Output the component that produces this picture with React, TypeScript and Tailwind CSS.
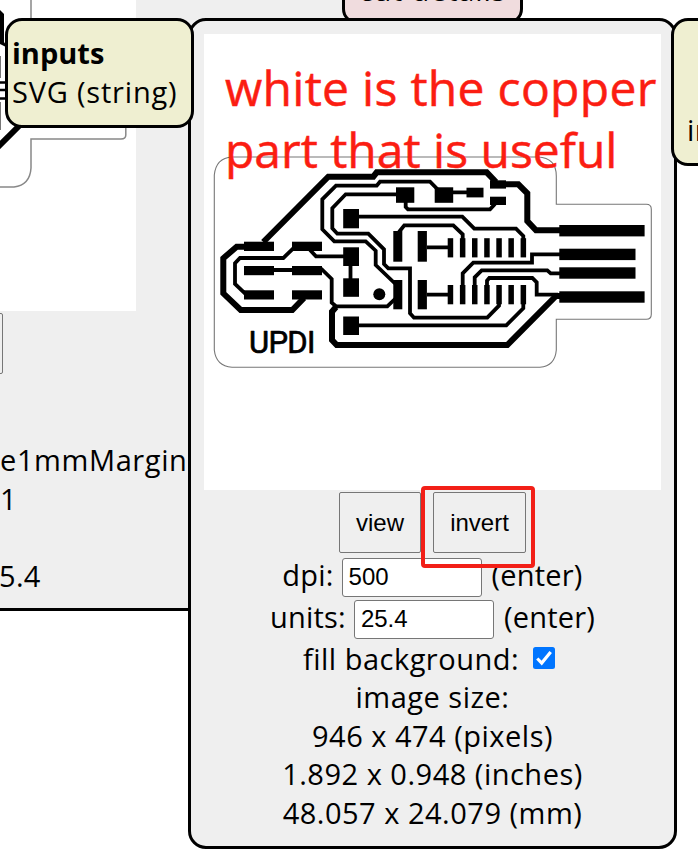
import React from "react";

const font = "font-['Open_Sans','Noto_Sans',sans-serif]";

const thick = [
  "M263.3 242L328.3 176.7H373.3L376.7 172.3H486.7L496 182",
  "M500 184.3H518.3L527.3 193.3V221L536 230.3H560",
  "M245 246.7H236.7L223.3 258.3V293.3L240.7 310H292.3L304 298",
  "M336 307L332 311.7V340L336.7 345H507.3L556 296H560",
];

const thin = [
  "M395 283.5L375.7 265V250.7L365.7 241.3H334.3L322.3 229.3V199.3L336 185.7H376.7L380 181.7H430L437.3 189",
  "M397 194.3H345.7L332.3 208.3V228.3L337.3 233.7H368.3L384 249.3V264L388.3 268.3H410V313.3L414 317.7H487.3L499 305.7V300",
  "M405.7 202V207L408 209.3H490L495 204",
  "M358 216.7H462.3L474.3 228.7H516L523.3 236V240",
  "M399 232L404.3 225.3H453.3L462.7 234.3V240",
  "M427 247.3H448M427 294.7H448M453 192.3H467",
  "M462.7 286V273.3L473.3 262.7H532V254.3H560",
  "M474.7 286V277.3L481.7 270.3H547.3L550.7 273.3H560",
  "M487 286V280.7L489.3 278H532.3L536.7 282.3V294.7H558",
  "M523.3 303V308.3L506.3 325.3H358",
  "M246 294.3L235 284V263.3L240 258H283.3L293.3 248.3",
  "M310 250L316 256.3H344M350.5 265V279M273 270H293",
  "M321 268.5L331.7 279V302.7L336 306.3H387.3L396 298",
];

const pads: number[][] = [
  [396, 187.3, 18.3, 15.5], [434.7, 187.3, 18.5, 15.5], [466.5, 187.7, 17, 9.7],
  [490, 180.3, 16, 8.3], [490, 196.7, 16, 8.3],
  [343.2, 209, 15.8, 19.3], [343.2, 247.3, 15.8, 18.7], [343.2, 278.3, 15.8, 18.5], [343.2, 316.5, 15.8, 18.5],
  [393.3, 231, 9, 30.7], [417.7, 231, 9.2, 30.7], [393.3, 280, 9, 29.3], [417.7, 280, 9.2, 29.3],
  [244, 241.7, 30, 9.3], [292, 241.7, 30, 9.3], [244, 266, 30, 9.2], [292, 266, 30, 9.2], [244, 290.3, 30, 9.2], [292, 290.3, 30, 9.2],
  [559.3, 225, 85.3, 11.4], [559.3, 248.7, 76.2, 11.4], [559.3, 267.3, 76.2, 11.4], [559.3, 291.3, 85.3, 11.4],
];
const pins = [447.7, 459.9, 472, 484.2, 496.3, 508.4, 520.6];

function Board() {
  return (
    <svg className="block h-[456px] w-[457px] bg-white" viewBox="204 34 457 456">
      <path d="M232 157H538Q556.3 158 556.3 176V204.3H646.3Q651.3 204.3 651.3 209.3V314.3Q651.3 319.3 646.3 319.3H556.3V350Q555 366 540 367.3H232Q216 366 214.3 350V175Q216 158 232 157Z" fill="none" stroke="#777" strokeWidth="1.1" />
      <g fill="none" stroke="#000">
        {thick.map((d) => <path key={d} d={d} strokeWidth="6" />)}
        {thin.map((d) => <path key={d} d={d} strokeWidth="3.8" />)}
      </g>
      {pads.map(([x, y, w, h]) => <rect key={x + "-" + y} x={x} y={y} width={w} height={h} />)}
      {pins.map((x) => (
        <g key={x}>
          <rect x={x} y="238.2" width="5.5" height="19.2" />
          <rect x={x} y="285" width="5.5" height="19.3" />
        </g>
      ))}
      <circle cx="379.3" cy="294.3" r="6" />
      <g fontSize="31" fontFamily="Roboto, sans-serif" stroke="#000" strokeWidth="0.7" strokeLinejoin="round">
        <text x="249" y="353" textLength="67" lengthAdjust="spacing">UPDI</text>
      </g>
    </svg>
  );
}

function Field({ label, value }: { label: string; value: string }) {
  return (
    <div className="flex h-[42px] items-center justify-center">
      <span className="-mt-[3px] tracking-[0.2px]">{label}</span>
      <span className="ml-[8px] mr-[10px] flex h-[39px] w-[140px] items-center rounded-[3px] border border-[#767676] bg-white pl-[6px] font-['Liberation_Sans',Arial,sans-serif] text-[24px] tracking-normal">{value}</span>
      <span className="-mt-[3px] tracking-[0.2px]">(enter)</span>
    </div>
  );
}

const button = "flex h-[61px] items-center justify-center rounded-[2px] border border-[#767676] bg-[#efefef] pt-px font-['Liberation_Sans',Arial,sans-serif] text-[24px] tracking-normal text-black";

export default function App() {
  return (
    <div className={`relative h-[868px] w-[698px] overflow-hidden bg-white text-[29px] leading-[38.6px] tracking-[0.5px] text-black ${font}`}>
      <section className="absolute left-[-280px] top-[-20px] h-[631px] w-[642px] border-[3px] border-black bg-[#efefef]">
        <div className="ml-auto mr-[223px] h-[328px] w-[413px] bg-white">
          <svg className="ml-auto block h-[328px] w-[136px]" viewBox="0 -17 136 328">
            <path d="M31 -17V30M125.8 110V135Q125.8 139 121 139H31V168Q30 185 14 187H0" fill="none" stroke="#888" strokeWidth="1.5" />
            <path d="M0 10L4 14V42L8 48L0 44Z" />
            <path d="M0.5 56V78M0.5 102V130" stroke="#777" />
            <path d="M0 82.5H8M0 90H8M0 98.5H8" stroke="#000" strokeWidth="2.6" />
            <path d="M-2 147L26 119" stroke="#000" strokeWidth="6" />
          </svg>
        </div>
        <div className="mt-[2px] h-[61px] w-[280px] rounded-[2px] border border-[#767676]" />
        <div className="ml-[277px] mt-[67px] leading-[38.6px] tracking-[0.6px]">
          <p>e1mmMargin</p>
          <p>1</p>
          <p className="mt-[38.6px] -ml-px tracking-[0.3px]">5.4</p>
        </div>
      </section>

      <div className="absolute left-[342px] top-[-40px] flex h-[64px] w-[181px] justify-center rounded-[15px] border-[3px] border-black bg-[#f0dcde] pt-[8px] tracking-[0.8px]">cut details</div>

      <section className="absolute left-[188px] top-[18px] flex h-[831px] w-[489px] flex-col items-center rounded-[18px] border-[3px] border-black bg-[#efefef] pt-[13px]">
        <Board />
        <div className="mb-[3px] mt-[2px] flex gap-[12px]">
          <button className={`${button} w-[82px]`}>view</button>
          <button className={`${button} w-[93px]`}>invert</button>
        </div>
        <Field label="dpi:" value="500" />
        <Field label="units:" value="25.4" />
        <div className="mr-[7px] flex h-[38px] items-center gap-[14px]">
          <span>fill background:</span>
          <svg className="-mt-[2px] h-[22px] w-[22px]" viewBox="0 0 22 22">
            <rect width="22" height="22" rx="2.5" fill="#0075ff" />
            <path d="M4.3 11.5L8.7 16L17.7 5" fill="none" stroke="#fff" strokeWidth="3.2" />
          </svg>
        </div>
        <p>image size:</p>
        <p>946 x 474 (pixels)</p>
        <p>1.892 x 0.948 (inches)</p>
        <p>48.057 x 24.079 (mm)</p>
      </section>

      <div className="absolute left-[5px] top-[18px] h-[110px] w-[189px] whitespace-nowrap rounded-[17px] border-[3px] border-black bg-[#efefd1] pl-[4px] pt-[13px]">
        <p className="font-bold tracking-normal">inputs</p>
        <p className="tracking-[0.8px]">SVG (string)</p>
      </div>
      <div className="absolute left-[671px] top-[18px] h-[148px] w-[120px] rounded-[17px] border-[3px] border-black bg-[#efefd1] pl-[13px] pt-[90px]">in</div>

      <p className="absolute left-[225px] top-[57px] whitespace-nowrap text-[48px] leading-[61.5px] tracking-[0.3px] text-[#fb1d12] [-webkit-text-stroke:0.5px_#fb1d12]">
        white is the copper<br /><span className="tracking-normal">part that is useful</span>
      </p>
      <div className="absolute left-[421px] top-[486px] h-[82px] w-[114px] rounded-[4px] border-4 border-[#f21f17]" />
    </div>
  );
}
